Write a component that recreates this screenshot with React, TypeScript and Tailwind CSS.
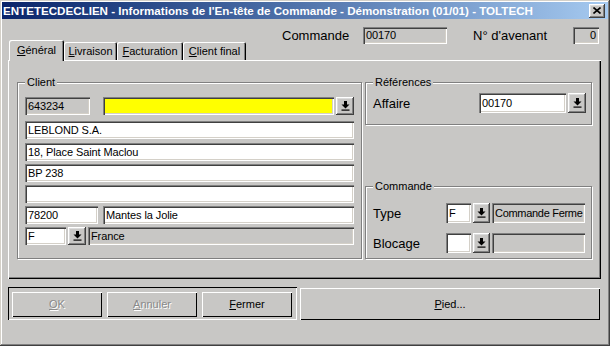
import React from 'react';

const raised =
  'bg-[#c8c7c5] shadow-[inset_-1px_-1px_#404040,inset_1px_1px_#ffffff,inset_-2px_-2px_#808080,inset_2px_2px_#dcdcdc]';
const sunken =
  'shadow-[inset_1px_1px_#808080,inset_2px_2px_#404040,inset_-1px_-1px_#ffffff,inset_-2px_-2px_#d4d0c8]';
const etched = 'border border-[#808080] shadow-[inset_1px_1px_#ffffff,1px_1px_#ffffff]';

function Field({
  w,
  h = 'h-[18px]',
  bg = 'bg-white',
  right,
  children,
}: {
  w: string;
  h?: string;
  bg?: string;
  right?: boolean;
  children?: React.ReactNode;
}) {
  return (
    <div
      className={`${w} ${h} ${bg} ${sunken} flex shrink-0 items-center overflow-hidden whitespace-nowrap px-[3px] text-[11px] leading-none tracking-[-0.1px] text-black ${
        right ? 'justify-end' : ''
      }`}
    >
      {children}
    </div>
  );
}

function DropButton({ w = 'w-[18px]', h = 'h-[18px]' }: { w?: string; h?: string }) {
  return (
    <div className={`${w} ${h} ${raised} flex shrink-0 items-center justify-center`}>
      <svg width="9" height="10" viewBox="0 0 9 10">
        <path d="M3 0h3v3.5h2.5L4.5 7.5 0.5 3.5H3z" fill="#000" />
        <rect x="0.5" y="8.5" width="8" height="1.2" fill="#000" />
      </svg>
    </div>
  );
}

function Group({
  label,
  className,
  children,
}: {
  label: string;
  className: string;
  children?: React.ReactNode;
}) {
  return (
    <div className={`relative ${etched} ${className}`}>
      <span className="absolute -top-[8px] left-[7px] bg-[#c8c7c5] px-[2px] text-[11px] leading-[14px] text-black">
        {label}
      </span>
      {children}
    </div>
  );
}

function Tab({ w, selected, children }: { w: string; selected?: boolean; children: React.ReactNode }) {
  return (
    <div
      className={`${w} flex items-center justify-center rounded-t-[2px] text-[11px] leading-none text-black ${
        selected
          ? 'relative z-10 -mb-[1px] h-[21px] bg-[#c8c7c5] shadow-[inset_1px_1px_#ffffff,inset_-1px_0_#000000,inset_-2px_0_#808080]'
          : 'h-[18px] shadow-[inset_1px_1px_#ffffff,inset_-1px_0_#000000,inset_-2px_0_#808080]'
      }`}
    >
      {children}
    </div>
  );
}

function WinButton({ w, h, disabled, children }: { w: string; h: string; disabled?: boolean; children: React.ReactNode }) {
  return (
    <div
      className={`${w} ${h} flex shrink-0 items-center justify-center bg-[#c8c7c5] text-[11px] leading-none shadow-[inset_1px_1px_#ffffff,inset_-1px_-1px_#000000] ${
        disabled ? 'text-[#8a8a8a] [text-shadow:1px_1px_#ffffff]' : 'text-black'
      }`}
    >
      {children}
    </div>
  );
}

export default function App() {
  return (
    <div className="flex h-[346px] w-[610px] flex-col bg-[#c8c7c5] p-[2px] font-['Liberation_Sans',Arial,sans-serif] shadow-[inset_-1px_-1px_#404040,inset_1px_1px_#d4d0c8,inset_-2px_-2px_#808080,inset_2px_2px_#ffffff]">
      {/* title bar */}
      <div className="flex h-[17px] shrink-0 items-center justify-between bg-gradient-to-r from-[#0a246a] to-[#a6caf0] pl-[1px] pr-[3px]">
        <span className="whitespace-nowrap text-[11.6px] font-bold leading-none text-white">
          ENTETECDECLIEN - Informations de l'En-tête de Commande - Démonstration (01/01) - TOLTECH
        </span>
        <div className={`h-[14px] w-[16px] ${raised} flex items-center justify-center`}>
          <svg width="8" height="7" viewBox="0 0 8 7">
            <path d="M0.5 0.5L7.5 6.5M7.5 0.5L0.5 6.5" stroke="#000" strokeWidth="1.6" />
          </svg>
        </div>
      </div>

      {/* commande header */}
      <div className="mt-[8px] flex h-[17px] shrink-0 items-center pl-[280px]">
        <span className="w-[81px] text-[13px] leading-none text-black">Commande</span>
        <Field w="w-[84px]" h="h-[17px]" bg="bg-[#c8c7c5]">
          00170
        </Field>
        <span className="ml-[26px] w-[100px] text-[13px] leading-none text-black">N° d'avenant</span>
        <Field w="w-[26px]" h="h-[17px]" bg="bg-[#c8c7c5]" right>
          0
        </Field>
      </div>

      {/* tabs */}
      <div className="-mt-[4px] flex h-[20px] shrink-0 items-end pl-[7px]">
        <Tab w="w-[55px]" selected>
          <span>
            <u>G</u>énéral
          </span>
        </Tab>
        <Tab w="w-[53px]">
          <span>
            <u>L</u>ivraison
          </span>
        </Tab>
        <Tab w="w-[66px]">
          <span>
            <u>F</u>acturation
          </span>
        </Tab>
        <Tab w="w-[63px]">
          <span>
            <u>C</u>lient final
          </span>
        </Tab>
      </div>

      {/* tab panel */}
      <div className="ml-[6px] flex h-[219px] w-[593px] shrink-0 pl-[9px] pt-[22px] shadow-[inset_1px_1px_#ffffff,inset_-1px_-1px_#000000,inset_-2px_-2px_#808080]">
        <Group label="Client" className="h-[177px] w-[345px] shrink-0 px-[7px] pt-[14px]">
          <div className="flex flex-col">
            <div className="flex items-center">
              <Field w="w-[65px]" bg="bg-[#c8c7c5]">
                643234
              </Field>
              <div className="ml-[13px]">
                <Field w="w-[231px]" bg="bg-[#ffff00]" />
              </div>
              <div className="ml-[2px]">
                <DropButton />
              </div>
            </div>
            <div className="mt-[6px]">
              <Field w="w-[329px]">LEBLOND S.A.</Field>
            </div>
            <div className="mt-[4px]">
              <Field w="w-[329px]">18, Place Saint Maclou</Field>
            </div>
            <div className="mt-[3px]">
              <Field w="w-[329px]">BP 238</Field>
            </div>
            <div className="mt-[3px]">
              <Field w="w-[329px]" />
            </div>
            <div className="mt-[3px] flex gap-[5px]">
              <Field w="w-[73px]">78200</Field>
              <Field w="w-[251px]">Mantes la Jolie</Field>
            </div>
            <div className="mt-[3px] flex items-center gap-[2px]">
              <Field w="w-[41px]">F</Field>
              <DropButton />
              <Field w="w-[266px]" bg="bg-[#c8c7c5]">
                France
              </Field>
            </div>
          </div>
        </Group>

        <div className="ml-[3px] flex w-[227px] shrink-0 flex-col">
          <Group label="Références" className="h-[43px] pl-[7px] pt-[10px]">
            <div className="flex items-center">
              <span className="w-[106px] text-[13px] leading-none text-black">Affaire</span>
              <Field w="w-[87px]" h="h-[20px]">
                00170
              </Field>
              <div className="ml-[2px]">
                <DropButton h="h-[20px]" />
              </div>
            </div>
          </Group>

          <Group label="Commande" className="mt-[61px] h-[73px] pl-[7px] pt-[16px]">
            <div className="flex items-center">
              <span className="w-[73px] text-[13px] leading-none text-black">Type</span>
              <Field w="w-[25px]" h="h-[20px]">
                F
              </Field>
              <div className="ml-[2px]">
                <DropButton w="w-[17px]" h="h-[20px]" />
              </div>
              <div className="ml-[2px]">
                <Field w="w-[93px]" h="h-[20px]" bg="bg-[#c8c7c5]">
                  <span className="tracking-[-0.3px]">Commande Ferme</span>
                </Field>
              </div>
            </div>
            <div className="mt-[10px] flex items-center">
              <span className="w-[73px] text-[13px] leading-none text-black">Blocage</span>
              <Field w="w-[25px]" h="h-[20px]" />
              <div className="ml-[2px]">
                <DropButton w="w-[17px]" h="h-[20px]" />
              </div>
              <div className="ml-[2px]">
                <Field w="w-[93px]" h="h-[20px]" bg="bg-[#c8c7c5]" />
              </div>
            </div>
          </Group>
        </div>
      </div>

      {/* bottom buttons */}
      <div className="ml-[6px] mt-[8px] flex items-start">
        <div className="flex h-[33px] w-[289px] shrink-0 gap-[5px] pl-[4px] pt-[5px] shadow-[inset_1px_1px_#000000,inset_-1px_-1px_#ffffff]">
          <WinButton w="w-[90px]" h="h-[25px]" disabled>
            <span>
              <u>O</u>K
            </span>
          </WinButton>
          <WinButton w="w-[90px]" h="h-[25px]" disabled>
            <span>
              <u>A</u>nnuler
            </span>
          </WinButton>
          <WinButton w="w-[90px]" h="h-[25px]">
            <span>
              <u>F</u>ermer
            </span>
          </WinButton>
        </div>
        <div className="ml-[3px] mt-[1px]">
          <WinButton w="w-[300px]" h="h-[32px]">
            <span>
              <u>P</u>ied...
            </span>
          </WinButton>
        </div>
      </div>
    </div>
  );
}
